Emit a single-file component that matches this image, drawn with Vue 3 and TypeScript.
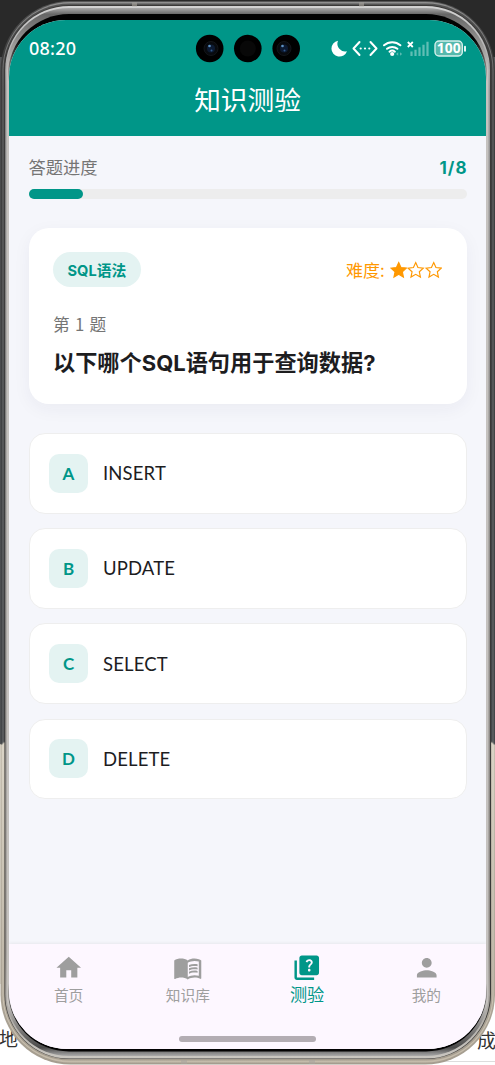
<script setup lang="ts">
interface Option { key: string; text: string }
interface Tab { label: string; paths: string[]; active?: boolean }
interface Shell { x: number; y: number; r: number; b: number; rx: number; color: string }

const current = 1
const total = 8
const options: Option[] = [
  { key: 'A', text: 'INSERT' },
  { key: 'B', text: 'UPDATE' },
  { key: 'C', text: 'SELECT' },
  { key: 'D', text: 'DELETE' },
]
const tabs: Tab[] = [
  { label: '首页', paths: ['M10 20v-6h4v6h5v-8h3L12 3 2 12h3v8z'] },
  {
    label: '知识库',
    paths: [
      'M21 5c-1.11-.35-2.33-.5-3.5-.5-1.95 0-4.05.4-5.5 1.5-1.45-1.1-3.55-1.5-5.5-1.5S2.45 4.9 1 6v14.65c0 .25.25.5.5.5.1 0 .15-.05.25-.05C3.1 20.45 5.05 20 6.5 20c1.95 0 4.05.4 5.5 1.5 1.35-.85 3.8-1.5 5.5-1.5 1.65 0 3.35.3 4.75 1.05.1.05.15.05.25.05.25 0 .5-.25.5-.5V6c-.6-.45-1.25-.75-2-1zm0 13.5c-1.1-.35-2.3-.5-3.5-.5-1.7 0-4.15.65-5.5 1.5V8c1.35-.85 3.8-1.5 5.5-1.5 1.2 0 2.4.15 3.5.5v11.5z',
      'M17.5 10.5c.88 0 1.73.09 2.5.26V9.24c-.79-.15-1.64-.24-2.5-.24-1.7 0-3.24.29-4.5.83v1.66c1.13-.64 2.7-.99 4.5-.99zM13 12.49v1.66c1.13-.64 2.7-.99 4.5-.99.88 0 1.73.09 2.5.26V11.9c-.79-.15-1.64-.24-2.5-.24-1.7 0-3.24.3-4.5.83zM17.5 14.33c-1.7 0-3.24.29-4.5.83v1.66c1.13-.64 2.7-.99 4.5-.99.88 0 1.73.09 2.5.26v-1.52c-.79-.16-1.64-.24-2.5-.24z',
    ],
  },
  {
    label: '测验',
    active: true,
    paths: [
      'M4 6H2v14c0 1.1.9 2 2 2h14v-2H4V6z',
      'M20 2H8c-1.1 0-2 .9-2 2v12c0 1.1.9 2 2 2h12c1.1 0 2-.9 2-2V4c0-1.1-.9-2-2-2zm-5.99 13c-.59 0-1.05-.47-1.05-1.05 0-.59.47-1.04 1.05-1.04.59 0 1.04.45 1.04 1.04-.01.58-.45 1.05-1.04 1.05zm2.5-6.17c-.63.93-1.23 1.21-1.56 1.81-.13.24-.18.4-.18 1.18h-1.52c0-.41-.06-1.08.26-1.65.41-.73 1.18-1.16 1.63-1.8.48-.68.21-1.94-1.14-1.94-.88 0-1.32.67-1.5 1.23l-1.37-.57C11.51 5.96 12.52 5 13.99 5c1.23 0 2.08.56 2.51 1.26.37.61.58 1.73.01 2.57z',
    ],
  },
  { label: '我的', paths: ['M12 12c2.21 0 4-1.79 4-4s-1.79-4-4-4-4 1.79-4 4 1.79 4 4 4zm0 2c-2.67 0-8 1.34-8 4v2h16v-2c0-2.66-5.33-4-8-4z'] },
]
const starPath = 'M12 1.8l3.1 6.800 7.400.8-5.500 5 1.500 7.300L12 18l-6.500 3.700L7 14.400l-5.500-5 7.400-.8z'

// Metal rim, drawn from the outermost ring inwards.
const shells: Shell[] = [
  { x: 0.5, y: 1, r: 495, b: 1064.5, rx: 70, color: 'url(#rimA)' },
  { x: 2.5, y: 2, r: 493.5, b: 1062.5, rx: 68, color: 'url(#rimB)' },
  { x: 3.5, y: 3.5, r: 492.5, b: 1060.5, rx: 66, color: 'url(#rimA)' },
  { x: 4.5, y: 5, r: 491, b: 1059, rx: 65, color: '#3a3938' },
  { x: 5.2, y: 6, r: 490, b: 1058.5, rx: 64, color: 'url(#rimC)' },
  { x: 6.5, y: 8, r: 488.5, b: 1056, rx: 62, color: 'url(#rimD)' },
]
</script>

<template>
  <div class="desktop">
    <svg class="shell" viewBox="0 0 495 1065" aria-hidden="true">
      <defs>
        <linearGradient id="rimA" x1="0" y1="0" x2="0" y2="1">
          <stop offset="0" stop-color="#555" /><stop offset=".05" stop-color="#3d3d3d" />
          <stop offset=".698" stop-color="#44474a" /><stop offset=".7" stop-color="#c6bfb1" />
          <stop offset="1" stop-color="#a59d8f" />
        </linearGradient>
        <linearGradient id="rimB" x1="0" y1="0" x2="0" y2="1">
          <stop offset="0" stop-color="#909090" /><stop offset=".08" stop-color="#6a6a6a" />
          <stop offset=".698" stop-color="#6b6d6e" /><stop offset=".7" stop-color="#eee8da" />
          <stop offset="1" stop-color="#c4bbaa" />
        </linearGradient>
        <linearGradient id="rimC" x1="0" y1="0" x2="0" y2="1">
          <stop offset="0" stop-color="#d2d2d2" /><stop offset=".08" stop-color="#999" />
          <stop offset=".9" stop-color="#8c8883" /><stop offset="1" stop-color="#c9c6c0" />
        </linearGradient>
        <linearGradient id="rimD" x1="0" y1="0" x2="0" y2="1">
          <stop offset="0" stop-color="#aaa" /><stop offset=".006" stop-color="#666" />
          <stop offset=".06" stop-color="#c5c2bf" /><stop offset=".95" stop-color="#c5c2bf" />
          <stop offset=".992" stop-color="#4a4a4a" /><stop offset="1" stop-color="#aaa" />
        </linearGradient>
        <linearGradient id="lip" gradientUnits="userSpaceOnUse" x1="0" y1="14" x2="0" y2="1051">
          <stop offset=".025" stop-color="#020202" /><stop offset=".065" stop-color="#c5c2bf" />
          <stop offset=".935" stop-color="#c5c2bf" /><stop offset=".975" stop-color="#020202" />
        </linearGradient>
      </defs>
      <rect width="495" height="1065" fill="#fff" />
      <rect width="495" height="57" fill="#292929" />
      <rect y="57" width="495" height="687" fill="#555759" />
      <rect y="744" width="495" height="240" fill="#ddd8cc" />
      <path d="M430 1061.5h65" stroke="#ddd" />
      <text x="-1" y="1046" class="behind">地</text>
      <text x="477" y="1048" class="behind">成</text>
      <rect v-for="(s, i) in shells" :key="i" :x="s.x" :y="s.y" :width="s.r - s.x" :height="s.b - s.y" :rx="s.rx" :fill="s.color" />
      <rect x="8" y="14" width="479" height="1037.5" rx="61" fill="url(#lip)" />
      <path d="M132 4.5h5M359 4.5h5M181 1062h6M309 1062h6" stroke="#aaa69f" stroke-width="4" opacity=".6" />
    </svg>

    <main class="screen">
      <header class="header">
        <div class="status">
          <span class="time">08:20</span>
          <svg class="status-icons" viewBox="325 36 144 24" role="img" aria-label="status">
            <path d="M338 40.7a8 8 0 1 0 9 10.5a7.8 7.8 0 0 1-9-10.5z" fill="#fff" />
            <g fill="none" stroke="#fff" stroke-width="2" stroke-linecap="round" stroke-linejoin="round">
              <path d="M359.5 42l-6 6.5 6 6.5M370.5 42l6 6.5-6 6.5" />
              <path d="M384 45.3a12.2 12.2 0 0 1 16.4 0M387 48.8a8 8 0 0 1 10.4 0M389.5 51.7a4.2 4.2 0 0 1 5.4 0" />
            </g>
            <g fill="#fff">
              <circle cx="360.7" cy="48.5" r="1.1" /><circle cx="365" cy="48.5" r="1.1" /><circle cx="369.3" cy="48.5" r="1.1" />
              <circle cx="392.2" cy="54" r="2.1" />
            </g>
            <path d="M396 54l2.2-1.8v3.6zM402.2 54l-2.200-1.800v3.600z" fill="#fff" opacity=".35" />
            <path d="M407.800 42l5 5M412.800 42l-5 5" stroke="#fff" stroke-width="1.8" />
            <path d="M411.500 51.500V56M415.500 49.700V56M419.500 47.300V56M423.500 44.700V56M427.500 41.700V56" stroke="#fff" stroke-width="2.2" opacity=".38" />
            <rect x="435" y="41" width="27.3" height="15" rx="4" fill="#56b9ad" stroke="#d5f0ec" stroke-width="1.4" />
            <path d="M465 46.700v4" stroke="#e2f4f2" stroke-width="2" stroke-linecap="round" />
            <text x="448.7" y="53.4" text-anchor="middle" class="battery">100</text>
          </svg>
          <svg class="cameras" viewBox="195 34 106 29" aria-hidden="true">
            <g fill="#000"><circle cx="209.7" cy="48.5" r="13.8" /><circle cx="247.8" cy="48.5" r="13.8" /><circle cx="286.2" cy="48.5" r="13.8" /></g>
            <circle cx="247.8" cy="48.5" r="8" fill="#080808" />
            <g v-for="cx in [211, 284]" :key="cx">
              <circle :cx="cx" cy="48.5" r="7" fill="#080a0e" stroke="#131519" />
              <circle :cx="cx" cy="48.5" r="4" fill="#0c1a32" />
              <circle :cx="cx - 1.5" cy="46" r="1.3" fill="#5f93c6" /><circle :cx="cx + .5" cy="50.5" r="1" fill="#31588d" />
            </g>
          </svg>
        </div>
        <h1>知识测验</h1>
      </header>

      <section class="content">
        <div class="progress-head"><span>答题进度</span><b>{{ current }}/{{ total }}</b></div>
        <div class="track"><div class="fill" :style="{ width: (current / total) * 100 + '%' }"></div></div>

        <article class="card">
          <div class="meta">
            <span class="tag"><span>SQL</span>语法</span>
            <span class="level">
              <span>难度:</span>
              <svg v-for="n in 3" :key="n" viewBox="0 0 24 24"><path :d="starPath" :class="{ solid: n <= 1 }" /></svg>
            </span>
          </div>
          <p class="number">第 {{ current }} 题</p>
          <h2>以下哪个<span>SQL</span>语句用于查询数据<span>?</span></h2>
        </article>

        <div class="options">
          <button v-for="o in options" :key="o.key" class="option">
            <span class="badge">{{ o.key }}</span><span class="option-text">{{ o.text }}</span>
          </button>
        </div>
      </section>

      <nav class="tabs">
        <a v-for="t in tabs" :key="t.label" class="tab" :class="{ active: t.active }">
          <svg viewBox="0 0 24 24"><path v-for="p in t.paths" :key="p" :d="p" fill-rule="evenodd" /></svg>
          <span>{{ t.label }}</span>
        </a>
        <i class="home-bar"></i>
      </nav>
    </main>
  </div>
</template>

<style>
body { margin: 0; overflow: hidden; }
</style>

<style scoped>
* { box-sizing: border-box; }
.desktop {
  position: relative; width: 495px; height: 1065px; padding: 20px 9px 16px; overflow: hidden;
  font-family: "Noto Sans", "Noto Sans CJK SC", sans-serif;
}
.shell { position: absolute; inset: 0; width: 495px; height: 1065px; }
.behind { font: 19px "Noto Sans CJK SC", sans-serif; fill: #333; }
.screen {
  position: relative; display: flex; flex-direction: column; width: 477px; height: 1029px;
  border-radius: 57px 57px 58px 58px; overflow: hidden; background: #f5f6fb;
}
.header { height: 115.5px; background: #009688; color: #fff; flex: none; }
.status { display: flex; justify-content: space-between; align-items: center; height: 57px; padding: 0 17px 0 20px; position: relative; }
.time { font: 500 18px/24px "Noto Sans", sans-serif; letter-spacing: .25px; margin-top: -1px; }
.status-icons { width: 144px; height: 24px; margin-top: -1px; }
.battery { font: 700 13.8px "Noto Sans", sans-serif; fill: #fff; }
.cameras { position: absolute; left: 186px; top: 14px; width: 106px; height: 29px; }
h1 { margin: 2px 0 0; text-align: center; font: 400 26.7px/40px "Noto Sans CJK SC", sans-serif; }
.content { flex: 1; padding: 20px 19.5px 0; }
.progress-head { display: flex; justify-content: space-between; align-items: center; height: 24px; font: 17.3px/24px "Noto Sans CJK SC", sans-serif; color: #757575; }
.progress-head span { margin-top: -2px; }
.progress-head b { color: #009688; font: 700 17px/24px Inter, sans-serif; letter-spacing: 1px; margin-right: -1px; }
.track { height: 9.7px; margin-top: 9.8px; border-radius: 5px; background: #ededed; }
.fill { height: 100%; border-radius: 5px; background: #009688; }
.card { height: 176px; margin-top: 29px; padding: 24.5px; border-radius: 20px; background: #fff; box-shadow: 0 5px 18px rgba(30, 40, 80, .05); }
.meta { display: flex; justify-content: space-between; align-items: center; height: 35px; }
.tag { height: 35px; padding: 0 14.5px; border-radius: 18px; background: #e4f3f2; color: #009688; font: 700 14.8px/35px "Noto Sans CJK SC", sans-serif; }
.tag span { font-family: Inter, sans-serif; font-size: 14.6px; }
.level { display: flex; align-items: center; color: #ff9800; font: 17px/24px "Noto Sans CJK SC", sans-serif; }
.level > span { margin-right: 5px; }
.level svg { width: 17.4px; height: 18px; fill: none; stroke: currentColor; stroke-width: 1.6; }
.level .solid { fill: #ff9800; }
.number { margin: 25px 0 0; font: 16.7px/25px "Noto Sans CJK SC", sans-serif; color: #757575; word-spacing: 1.5px; }
h2 { margin: 7px 0 0; font: 700 22.2px/34px "Noto Sans CJK SC", sans-serif; color: #1d1d1f; white-space: nowrap; }
h2 span { font-family: Inter, sans-serif; font-size: 22px; }
.options { display: grid; gap: 14.6px; margin-top: 29px; }
.option { display: flex; align-items: center; gap: 15px; width: 100%; height: 80.6px; padding: 0 19.5px; border: 1.2px solid #eee; border-radius: 16px; background: #fff; text-align: left; }
.badge { display: grid; place-items: center; width: 39px; height: 39px; border-radius: 10px; background: #e4f3f2; color: #009688; font: 700 17px/1 Lato, sans-serif; }
.option-text { font: 18.5px/24px Lato, sans-serif; color: #1d1d1f; letter-spacing: .15px; }
.tabs { position: relative; display: grid; grid-template-columns: repeat(4, 1fr); height: 105.5px; flex: none; background: #fdf7ff; box-shadow: 0 -1px 3px rgba(0, 0, 0, .06); padding-top: 9px; }
.tab { display: flex; flex-direction: column; align-items: center; color: #9e9e9e; font: 14.7px/22px "Noto Sans CJK SC", sans-serif; }
.tab svg { width: 29.5px; height: 29.5px; fill: currentColor; }
.tab span { margin-top: 2px; }
.tab.active { color: #009688; font-size: 17.2px; }
.tab.active span { margin-top: 1px; }
.home-bar { position: absolute; left: 170px; bottom: 7.5px; width: 137px; height: 6px; border-radius: 3px; background: #b3adb3; }
</style>
